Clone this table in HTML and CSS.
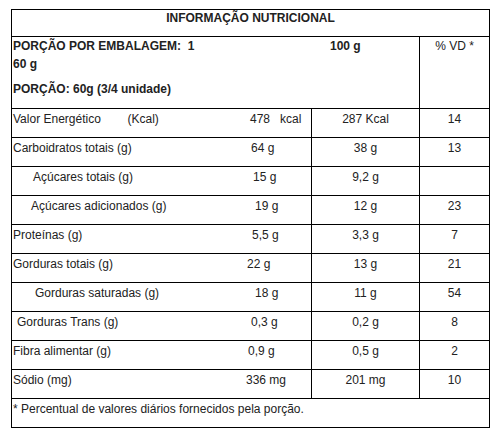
FILE: index.html
```html
<!DOCTYPE html>
<html lang="pt-BR">
<head>
  <meta charset="UTF-8">
  <title>Informação Nutricional</title>
  <meta name="viewport" content="width=device-width, initial-scale=1.0">
  <link rel="stylesheet" href="styles.css">
</head>
<body>

  <table class="nutri">
    <colgroup>
      <col class="c-label">
      <col class="c-mid">
      <col class="c-vd">
    </colgroup>

    <tr class="title-row">
      <td colspan="3">INFORMAÇÃO NUTRICIONAL</td>
    </tr>

    <tr class="serving-row">
      <td colspan="2">
        <div class="serving">
          <div class="serving-text">
            <p class="pack">PORÇÃO POR EMBALAGEM:&nbsp; 1<br>60 g</p>
            <p>PORÇÃO: 60g (3/4 unidade)</p>
          </div>
          <div class="per100">100 g</div>
        </div>
      </td>
      <td class="vd-head">% VD *</td>
    </tr>

    <tr>
      <td><span class="lbl">Valor Energético&nbsp;&nbsp;&nbsp;&nbsp;&nbsp;&nbsp;&nbsp;&nbsp;(Kcal)</span><span class="amt n2">478&nbsp;&nbsp;&nbsp;kcal</span></td>
      <td class="mid">287 Kcal</td>
      <td class="vd">14</td>
    </tr>
    <tr>
      <td><span class="lbl">Carboidratos totais (g)</span><span class="amt n3">64 g</span></td>
      <td class="mid">38 g</td>
      <td class="vd">13</td>
    </tr>
    <tr>
      <td><span class="lbl ind-20">Açúcares totais (g)</span><span class="amt n5">15 g</span></td>
      <td class="mid">9,2 g</td>
      <td class="vd"></td>
    </tr>
    <tr>
      <td><span class="lbl ind-18">Açúcares adicionados (g)</span><span class="amt n7">19 g</span></td>
      <td class="mid">12 g</td>
      <td class="vd">23</td>
    </tr>
    <tr>
      <td><span class="lbl">Proteínas (g)</span><span class="amt n4">5,5 g</span></td>
      <td class="mid">3,3 g</td>
      <td class="vd">7</td>
    </tr>
    <tr>
      <td><span class="lbl">Gorduras totais (g)</span><span class="amt n-1">22 g</span></td>
      <td class="mid">13 g</td>
      <td class="vd">21</td>
    </tr>
    <tr>
      <td><span class="lbl ind-22">Gorduras saturadas (g)</span><span class="amt n7">18 g</span></td>
      <td class="mid">11 g</td>
      <td class="vd">54</td>
    </tr>
    <tr>
      <td><span class="lbl ind-4">Gorduras Trans (g)</span><span class="amt n3">0,3 g</span></td>
      <td class="mid">0,2 g</td>
      <td class="vd">8</td>
    </tr>
    <tr>
      <td><span class="lbl">Fibra alimentar (g)</span><span class="amt">0,9 g</span></td>
      <td class="mid">0,5 g</td>
      <td class="vd">2</td>
    </tr>
    <tr>
      <td><span class="lbl">Sódio (mg)</span><span class="amt n-2">336 mg</span></td>
      <td class="mid">201 mg</td>
      <td class="vd">10</td>
    </tr>

    <tr class="foot-row">
      <td colspan="3">* Percentual de valores diários fornecidos pela porção.</td>
    </tr>
  </table>

</body>
</html>
```

FILE: styles.css
```css
* { margin: 0; padding: 0; box-sizing: border-box; }
body {
  background: #fff;
  font-family: 'Liberation Sans', Arial, sans-serif;
  font-size: 12px;
  color: #222;
}

.nutri {
  margin: 9px 0 0 11px;
  width: 478px;
  table-layout: fixed;
  border-collapse: collapse;
}

.c-label { width: 300px; }
.c-mid { width: 108px; }
.c-vd { width: 70px; }

.nutri td {
  border: 1px solid #000;
  padding: 3px 1px 11px;
  line-height: 14px;
  vertical-align: top;
  white-space: nowrap;
}

.title-row td {
  padding: 1px 1px 11px;
  text-align: center;
  font-weight: bold;
}

.serving-row td {
  padding: 0 1px 10px;
  line-height: 18px;
}

.serving {
  display: flex;
  font-weight: bold;
}
.serving-text { width: 317px; }
.serving-text .pack { margin-bottom: 7px; }

.vd-head { text-align: center; }

.lbl {
  display: inline-block;
  width: 235px;
}
.ind-4 { padding-left: 4px; }
.ind-18 { padding-left: 18px; }
.ind-20 { padding-left: 20px; }
.ind-22 { padding-left: 22px; }

.amt { display: inline-block; }
.n-2 { margin-left: -2px; }
.n-1 { margin-left: -1px; }
.n2 { margin-left: 2px; }
.n3 { margin-left: 3px; }
.n4 { margin-left: 4px; }
.n5 { margin-left: 5px; }
.n7 { margin-left: 7px; }

.mid, .vd { text-align: center; }

.foot-row td {
  padding: 3px 1px 11px;
}
```
